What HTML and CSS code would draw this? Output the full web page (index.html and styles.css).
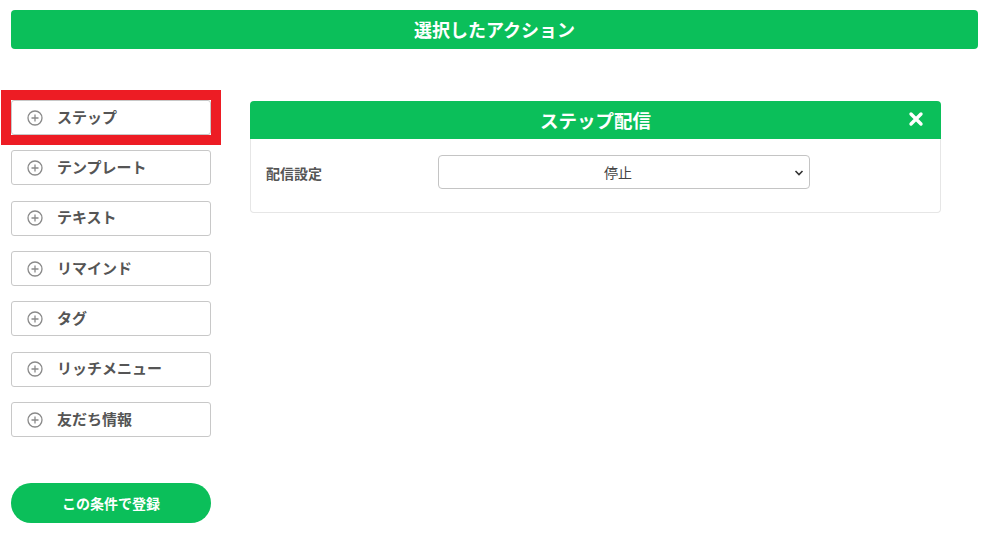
FILE: index.html
```html
<!DOCTYPE html>
<html lang="ja">
<head>
  <meta charset="UTF-8" />
  <meta name="viewport" content="width=device-width, initial-scale=1.0"/>
  <title>選択したアクション</title>
  <link rel="stylesheet" href="styles.css">
</head>
<body>
  <div class="page">
    <div class="title-bar">選択したアクション</div>

    <div class="main">
      <div class="sidebar">
        <button class="action-btn active"><svg class="plus" width="16" height="16" viewBox="0 0 16 16"><circle cx="8" cy="8" r="7" fill="none" stroke="#8a8a8a" stroke-width="1.3"/><path d="M4.5 8 H11.5 M8 4.5 V11.5" stroke="#8a8a8a" stroke-width="1.3"/></svg>ステップ</button>
        <button class="action-btn"><svg class="plus" width="16" height="16" viewBox="0 0 16 16"><circle cx="8" cy="8" r="7" fill="none" stroke="#8a8a8a" stroke-width="1.3"/><path d="M4.5 8 H11.5 M8 4.5 V11.5" stroke="#8a8a8a" stroke-width="1.3"/></svg>テンプレート</button>
        <button class="action-btn"><svg class="plus" width="16" height="16" viewBox="0 0 16 16"><circle cx="8" cy="8" r="7" fill="none" stroke="#8a8a8a" stroke-width="1.3"/><path d="M4.5 8 H11.5 M8 4.5 V11.5" stroke="#8a8a8a" stroke-width="1.3"/></svg>テキスト</button>
        <button class="action-btn"><svg class="plus" width="16" height="16" viewBox="0 0 16 16"><circle cx="8" cy="8" r="7" fill="none" stroke="#8a8a8a" stroke-width="1.3"/><path d="M4.5 8 H11.5 M8 4.5 V11.5" stroke="#8a8a8a" stroke-width="1.3"/></svg>リマインド</button>
        <button class="action-btn"><svg class="plus" width="16" height="16" viewBox="0 0 16 16"><circle cx="8" cy="8" r="7" fill="none" stroke="#8a8a8a" stroke-width="1.3"/><path d="M4.5 8 H11.5 M8 4.5 V11.5" stroke="#8a8a8a" stroke-width="1.3"/></svg>タグ</button>
        <button class="action-btn"><svg class="plus" width="16" height="16" viewBox="0 0 16 16"><circle cx="8" cy="8" r="7" fill="none" stroke="#8a8a8a" stroke-width="1.3"/><path d="M4.5 8 H11.5 M8 4.5 V11.5" stroke="#8a8a8a" stroke-width="1.3"/></svg>リッチメニュー</button>
        <button class="action-btn"><svg class="plus" width="16" height="16" viewBox="0 0 16 16"><circle cx="8" cy="8" r="7" fill="none" stroke="#8a8a8a" stroke-width="1.3"/><path d="M4.5 8 H11.5 M8 4.5 V11.5" stroke="#8a8a8a" stroke-width="1.3"/></svg>友だち情報</button>

        <button class="register-btn">この条件で登録</button>
      </div>

      <div class="panel">
        <div class="panel-head">
          ステップ配信
          <span class="close">
            <svg width="16" height="16" viewBox="0 0 16 16">
              <path d="M3 3 L13 13 M13 3 L3 13" stroke="#fff" stroke-width="3.4" stroke-linecap="round"/>
            </svg>
          </span>
        </div>
        <div class="panel-body">
          <label class="field-label">配信設定</label>
          <div class="select">
            <span>停止</span>
            <svg class="chev" width="10" height="8" viewBox="0 0 10 8">
              <path d="M1.5 2 L5 5.5 L8.5 2" fill="none" stroke="#333" stroke-width="1.6"/>
            </svg>
          </div>
        </div>
      </div>
    </div>
  </div>
</body>
</html>
```

FILE: styles.css
```css
body {
  margin: 0;
  font-family: "Noto Sans CJK JP", "Noto Sans", sans-serif;
  background: #fff;
  color: #555;
}

.page {
  padding: 10px 9px 0 11px;
}

.title-bar {
  height: 39px;
  background: #0bbf5a;
  border-radius: 4px;
  color: #fff;
  font-size: 18px;
  font-weight: bold;
  display: flex;
  align-items: center;
  justify-content: center;
  padding-bottom: 2px;
  box-sizing: border-box;
}

.main {
  display: flex;
  gap: 39px;
  margin-top: 51px;
}

.sidebar {
  width: 200px;
  display: flex;
  flex-direction: column;
  gap: 15.35px;
}

.action-btn {
  height: 35px;
  background: #fff;
  border: 1px solid #c8c8c8;
  border-radius: 3px;
  display: flex;
  align-items: center;
  padding: 0 0 3px 15px;
  font-family: inherit;
  font-size: 15px;
  font-weight: bold;
  color: #555;
  cursor: pointer;
  position: relative;
}

/* red highlight frame */
.action-btn.active::after {
  content: "";
  position: absolute;
  top: -11px;
  left: -11px;
  right: -11px;
  bottom: -11px;
  border: 10px solid #ed1c24;
}

.plus {
  margin: 3px 14px 0 0;
}

.register-btn {
  margin-top: 31px;
  height: 40px;
  border: none;
  border-radius: 20px;
  background: #0bbf5a;
  color: #fff;
  font-family: inherit;
  font-size: 14px;
  font-weight: bold;
  cursor: pointer;
  padding-bottom: 2px;
}

.panel {
  width: 691px;
  margin-top: 1px;
  align-self: flex-start;
}

.panel-head {
  height: 38px;
  background: #0bbf5a;
  border-radius: 4px 4px 0 0;
  color: #fff;
  font-size: 18.5px;
  font-weight: bold;
  display: flex;
  align-items: center;
  justify-content: center;
  position: relative;
  padding-bottom: 1px;
  box-sizing: border-box;
}

.close {
  position: absolute;
  right: 17px;
  top: 10px;
  display: flex;
}

.panel-body {
  border: 1px solid #e6e6e6;
  border-top: none;
  border-radius: 0 0 4px 4px;
  padding: 16px 0 23px 15px;
  display: flex;
  align-items: center;
}

.field-label {
  width: 172px;
  font-size: 14px;
  font-weight: bold;
  color: #555;
  padding-top: 1px;
}

.select {
  width: 358px;
  height: 32px;
  border: 1px solid #c4c4c4;
  border-radius: 4px;
  display: flex;
  align-items: center;
  justify-content: center;
  position: relative;
  font-size: 14px;
  color: #444;
  padding-right: 12px;
}

.chev {
  position: absolute;
  right: 5px;
  top: 13px;
}
```
